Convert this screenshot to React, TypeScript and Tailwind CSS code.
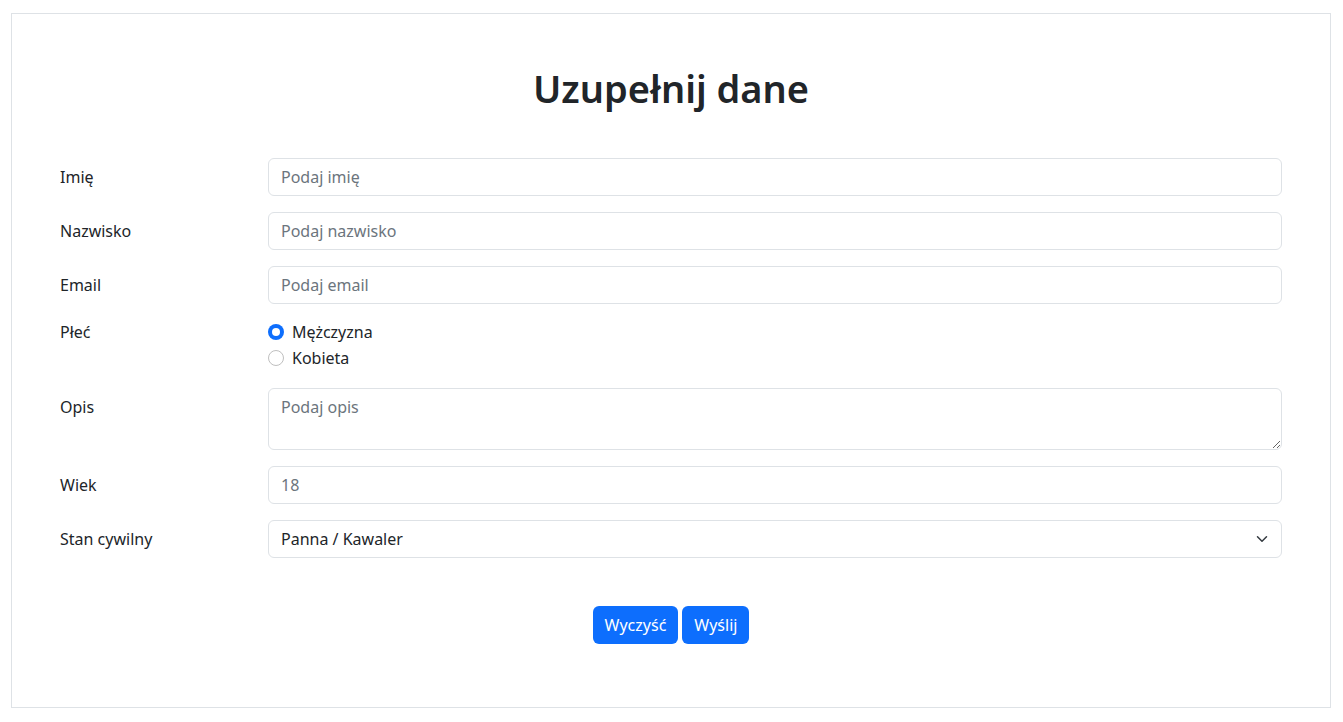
import { ChangeEvent, useState } from 'react';

const font = { fontFamily: '"Segoe UI", "Noto Sans", "Open Sans", sans-serif' };

const inputCls =
  'block w-full h-[38px] rounded-[6px] border border-[#dee2e6] bg-white px-3 text-base leading-6 text-[#212529] placeholder:text-[#6c757d] outline-none';

function FormRow({ label, children }: { label: string; children: React.ReactNode }) {
  return (
    <div className="mb-4 flex">
      <label className="w-[208px] shrink-0 pt-[7px] text-base leading-6 text-[#212529]">
        {label}
      </label>
      <div className="flex-1">{children}</div>
    </div>
  );
}

function Radio({
  label,
  checked,
  onSelect,
}: {
  label: string;
  checked: boolean;
  onSelect: () => void;
}) {
  return (
    <div className="mb-[2px] flex h-6 cursor-pointer items-center gap-2" onClick={onSelect}>
      {checked ? (
        <span className="flex h-4 w-4 items-center justify-center rounded-full bg-[#0d6efd]">
          <span className="h-2 w-2 rounded-full bg-white" />
        </span>
      ) : (
        <span className="h-4 w-4 rounded-full border border-[#bfbfbf] bg-white" />
      )}
      <span className="text-base leading-6 text-[#212529]">{label}</span>
    </div>
  );
}

export default function App() {
  const [gender, setGender] = useState('m');
  const [status, setStatus] = useState('panna');

  const onChangeStatus = (e: ChangeEvent<HTMLSelectElement>) => setStatus(e.target.value);

  return (
    <div className="min-h-screen bg-white pt-[13px]" style={font}>
      <div className="ml-[11px] mr-[12px] border border-[#dee2e6] px-12 pt-[50px] pb-[63px]">
        <h1 className="mb-[46px] text-center text-[38px] font-semibold leading-[48px] text-[#212529]">
          Uzupełnij dane
        </h1>

        <form onSubmit={(e) => e.preventDefault()}>
          <FormRow label="Imię">
            <input className={inputCls} placeholder="Podaj imię" />
          </FormRow>
          <FormRow label="Nazwisko">
            <input className={inputCls} placeholder="Podaj nazwisko" />
          </FormRow>
          <FormRow label="Email">
            <input className={inputCls} type="email" placeholder="Podaj email" />
          </FormRow>

          {/* płeć */}
          <div className="mb-4 flex">
            <label className="w-[208px] shrink-0 text-base leading-6 text-[#212529]">Płeć</label>
            <div className="flex-1">
              <Radio label="Mężczyzna" checked={gender === 'm'} onSelect={() => setGender('m')} />
              <Radio label="Kobieta" checked={gender === 'k'} onSelect={() => setGender('k')} />
            </div>
          </div>

          <FormRow label="Opis">
            <textarea
              rows={2}
              placeholder="Podaj opis"
              className="block h-[62px] w-full rounded-[6px] border border-[#dee2e6] bg-white px-3 py-[6px] text-base leading-6 text-[#212529] placeholder:text-[#6c757d] outline-none"
            />
          </FormRow>
          <FormRow label="Wiek">
            <input className={inputCls} type="number" placeholder="18" />
          </FormRow>
          <FormRow label="Stan cywilny">
            <div className="relative">
              <select
                value={status}
                onChange={onChangeStatus}
                className={`${inputCls} appearance-none pr-9`}
              >
                <option value="panna">Panna / Kawaler</option>
                <option value="mezatka">Mężatka / Żonaty</option>
                <option value="wdowa">Wdowa / Wdowiec</option>
              </select>
              <svg
                className="pointer-events-none absolute right-[14px] top-[13px]"
                width="12"
                height="12"
                viewBox="0 0 16 16"
                fill="none"
                stroke="#343a40"
                strokeWidth="2"
                strokeLinecap="round"
                strokeLinejoin="round"
              >
                <path d="m2 5 6 6 6-6" />
              </svg>
            </div>
          </FormRow>

          <div className="mt-12 flex justify-center gap-1">
            <button
              type="reset"
              className="h-[38px] rounded-[6px] bg-[#0d6efd] px-3 text-base leading-6 text-white"
            >
              Wyczyść
            </button>
            <button
              type="submit"
              className="h-[38px] rounded-[6px] bg-[#0d6efd] px-3 text-base leading-6 text-white"
            >
              Wyślij
            </button>
          </div>
        </form>
      </div>
    </div>
  );
}
